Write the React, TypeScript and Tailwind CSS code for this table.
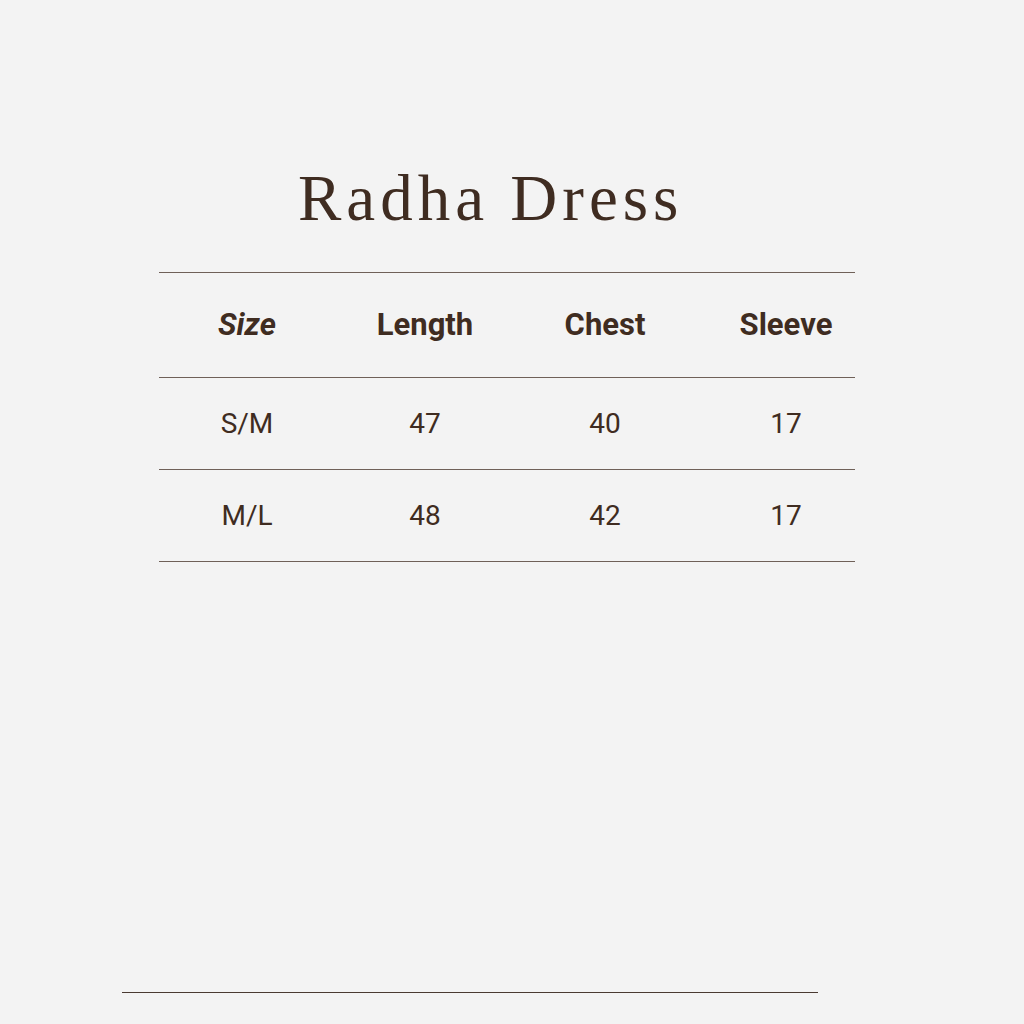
import React from "react";

const rows = [
  ["S/M", "47", "40", "17"],
  ["M/L", "48", "42", "17"],
];

function Cells({ cells, header }: { cells: string[]; header?: boolean }) {
  const base = header
    ? "font-bold text-[31px]"
    : "font-normal text-[28px]";
  return (
    <>
      <div className={`w-[176px] text-center ${base} ${header ? "italic" : ""}`}>{cells[0]}</div>
      <div className={`w-[180px] text-center ${base}`}>{cells[1]}</div>
      <div className={`w-[180px] text-center ${base}`}>{cells[2]}</div>
      <div className={`w-[160px] pl-[22px] text-center ${base}`}>{cells[3]}</div>
    </>
  );
}

export default function App() {
  return (
    <div className="w-[1024px] h-[1024px] bg-[#f3f3f3] text-[#3f2c21] flex flex-col overflow-hidden">
      <div
        className="pt-[166px] pl-[298px] text-[65px] leading-none tracking-[5px]"
        style={{ fontFamily: '"Liberation Serif", serif' }}
      >
        Radha Dress
      </div>
      <div
        className="mt-[41px] ml-[159px] w-[696px] flex flex-col"
        style={{ fontFamily: 'Roboto, "Open Sans", sans-serif' }}
      >
        <div className="h-[106px] border-t border-b border-[#6f6058] flex items-center">
          <Cells cells={["Size", "Length", "Chest", "Sleeve"]} header />
        </div>
        {rows.map((r, i) => (
          <div key={i} className="h-[92px] border-b border-[#6f6058] flex items-center">
            <Cells cells={r} />
          </div>
        ))}
      </div>
      <div className="mt-auto mb-[31px] ml-[122px] w-[696px] border-t border-[#4a3a31]" />
    </div>
  );
}
